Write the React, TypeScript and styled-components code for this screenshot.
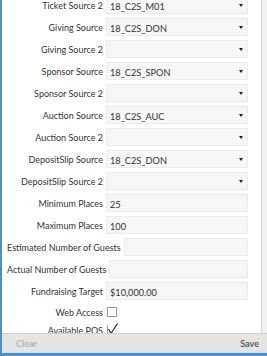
import React from "react";
import styled, { createGlobalStyle } from "styled-components";

const GlobalStyle = createGlobalStyle`
  html, body { margin: 0; padding: 0; background: #ffffff; }
  body { font-family: Lato, "Open Sans", sans-serif; }
  * { box-sizing: border-box; }
`;

const Frame = styled.div`
  width: 267px;
  height: 356px;
  display: flex;
  flex-direction: column;
  border-left: 2px solid #4a8fd6;
  border-bottom: 3px solid #4a8fd6;
  background: #ffffff;
  overflow: hidden;
`;

const Body = styled.div`
  flex: 1;
  display: flex;
  min-height: 0;
  overflow: hidden;
  border-bottom: 1px solid #cfcfcf;
`;

const Form = styled.div`
  flex: 1;
  display: flex;
  flex-direction: column;
  margin-top: -4px;
  padding-right: 13px;
`;

const ScrollTrack = styled.div`
  width: 6px;
  border-left: 1px solid #d9d9d9;
  background: #f2f2f2;
`;

const Row = styled.div<{ $compact?: boolean }>`
  display: flex;
  align-items: center;
  height: 18px;
  margin-bottom: ${(p) => (p.$compact ? "0" : "4px")};
  flex-shrink: 0;
`;

const Label = styled.div`
  min-width: 104px;
  padding: 0 3px 0 5px;
  text-align: right;
  white-space: nowrap;
  font-size: 9px;
  line-height: 11px;
  color: #333333;
`;

const Field = styled.div`
  flex: 1;
  height: 18px;
  display: flex;
  align-items: center;
  justify-content: space-between;
  padding: 2px 3px 0 3px;
  background: #f6f6f6;
  border: 1px solid #ececec;
  font-size: 9.2px;
  color: #333333;
`;

const Arrow = styled.span`
  width: 0;
  height: 0;
  border-left: 2px solid transparent;
  border-right: 2px solid transparent;
  border-top: 3px solid #222222;
  margin: 0 1px 2px 0;
`;

const CheckGroup = styled.div`
  margin-top: -1px;
  display: flex;
  flex-direction: column;
`;

const Box = styled.span`
  display: inline-block;
  width: 10px;
  height: 10px;
  border: 1px solid #9a9a9a;
  background: #ffffff;
  margin-left: 1px;
`;

const CheckSvg = styled.svg`
  display: block;
  margin-left: 1px;
  margin-top: -2px;
`;

const Footer = styled.div`
  height: 19px;
  display: flex;
  align-items: center;
  justify-content: space-between;
  padding: 0 8px 0 14px;
  background: #e4e4e4;
  font-size: 9px;
  font-weight: 700;
`;

const FooterButton = styled.span<{ $disabled?: boolean }>`
  color: ${(p) => (p.$disabled ? "#b4b4b4" : "#5a5a5a")};
`;

type FieldRow = { label: string; value?: string; select?: boolean };

const rows: FieldRow[] = [
  { label: "Ticket Source 2", value: "18_C2S_M01", select: true },
  { label: "Giving Source", value: "18_C2S_DON", select: true },
  { label: "Giving Source 2", select: true },
  { label: "Sponsor Source", value: "18_C2S_SPON", select: true },
  { label: "Sponsor Source 2", select: true },
  { label: "Auction Source", value: "18_C2S_AUC", select: true },
  { label: "Auction Source 2", select: true },
  { label: "DepositSlip Source", value: "18_C2S_DON", select: true },
  { label: "DepositSlip Source 2", select: true },
  { label: "Minimum Places", value: "25" },
  { label: "Maximum Places", value: "100" },
  { label: "Estimated Number of Guests" },
  { label: "Actual Number of Guests" },
  { label: "Fundraising Target", value: "$10,000.00" },
];

export default function App() {
  return (
    <>
      <GlobalStyle />
      <Frame>
        <Body>
          <Form>
            {rows.map((r) => (
              <Row key={r.label}>
                <Label>{r.label}</Label>
                <Field>
                  <span>{r.value ?? ""}</span>
                  {r.select && <Arrow />}
                </Field>
              </Row>
            ))}
            <CheckGroup>
              <Row $compact>
                <Label>Web Access</Label>
                <Box />
              </Row>
              <Row $compact>
                <Label>Available POS</Label>
                <CheckSvg width="12" height="12" viewBox="0 0 12 12">
                  <path d="M0.5 2.5 V11.5 H7" fill="none" stroke="#9a9a9a" strokeWidth="1" />
                  <path d="M1.5 6 L4 10.5 L10.5 0.5" fill="none" stroke="#222" strokeWidth="1.1" />
                </CheckSvg>
              </Row>
            </CheckGroup>
          </Form>
          <ScrollTrack />
        </Body>
        <Footer>
          <FooterButton $disabled>Clear</FooterButton>
          <FooterButton>Save</FooterButton>
        </Footer>
      </Frame>
    </>
  );
}
